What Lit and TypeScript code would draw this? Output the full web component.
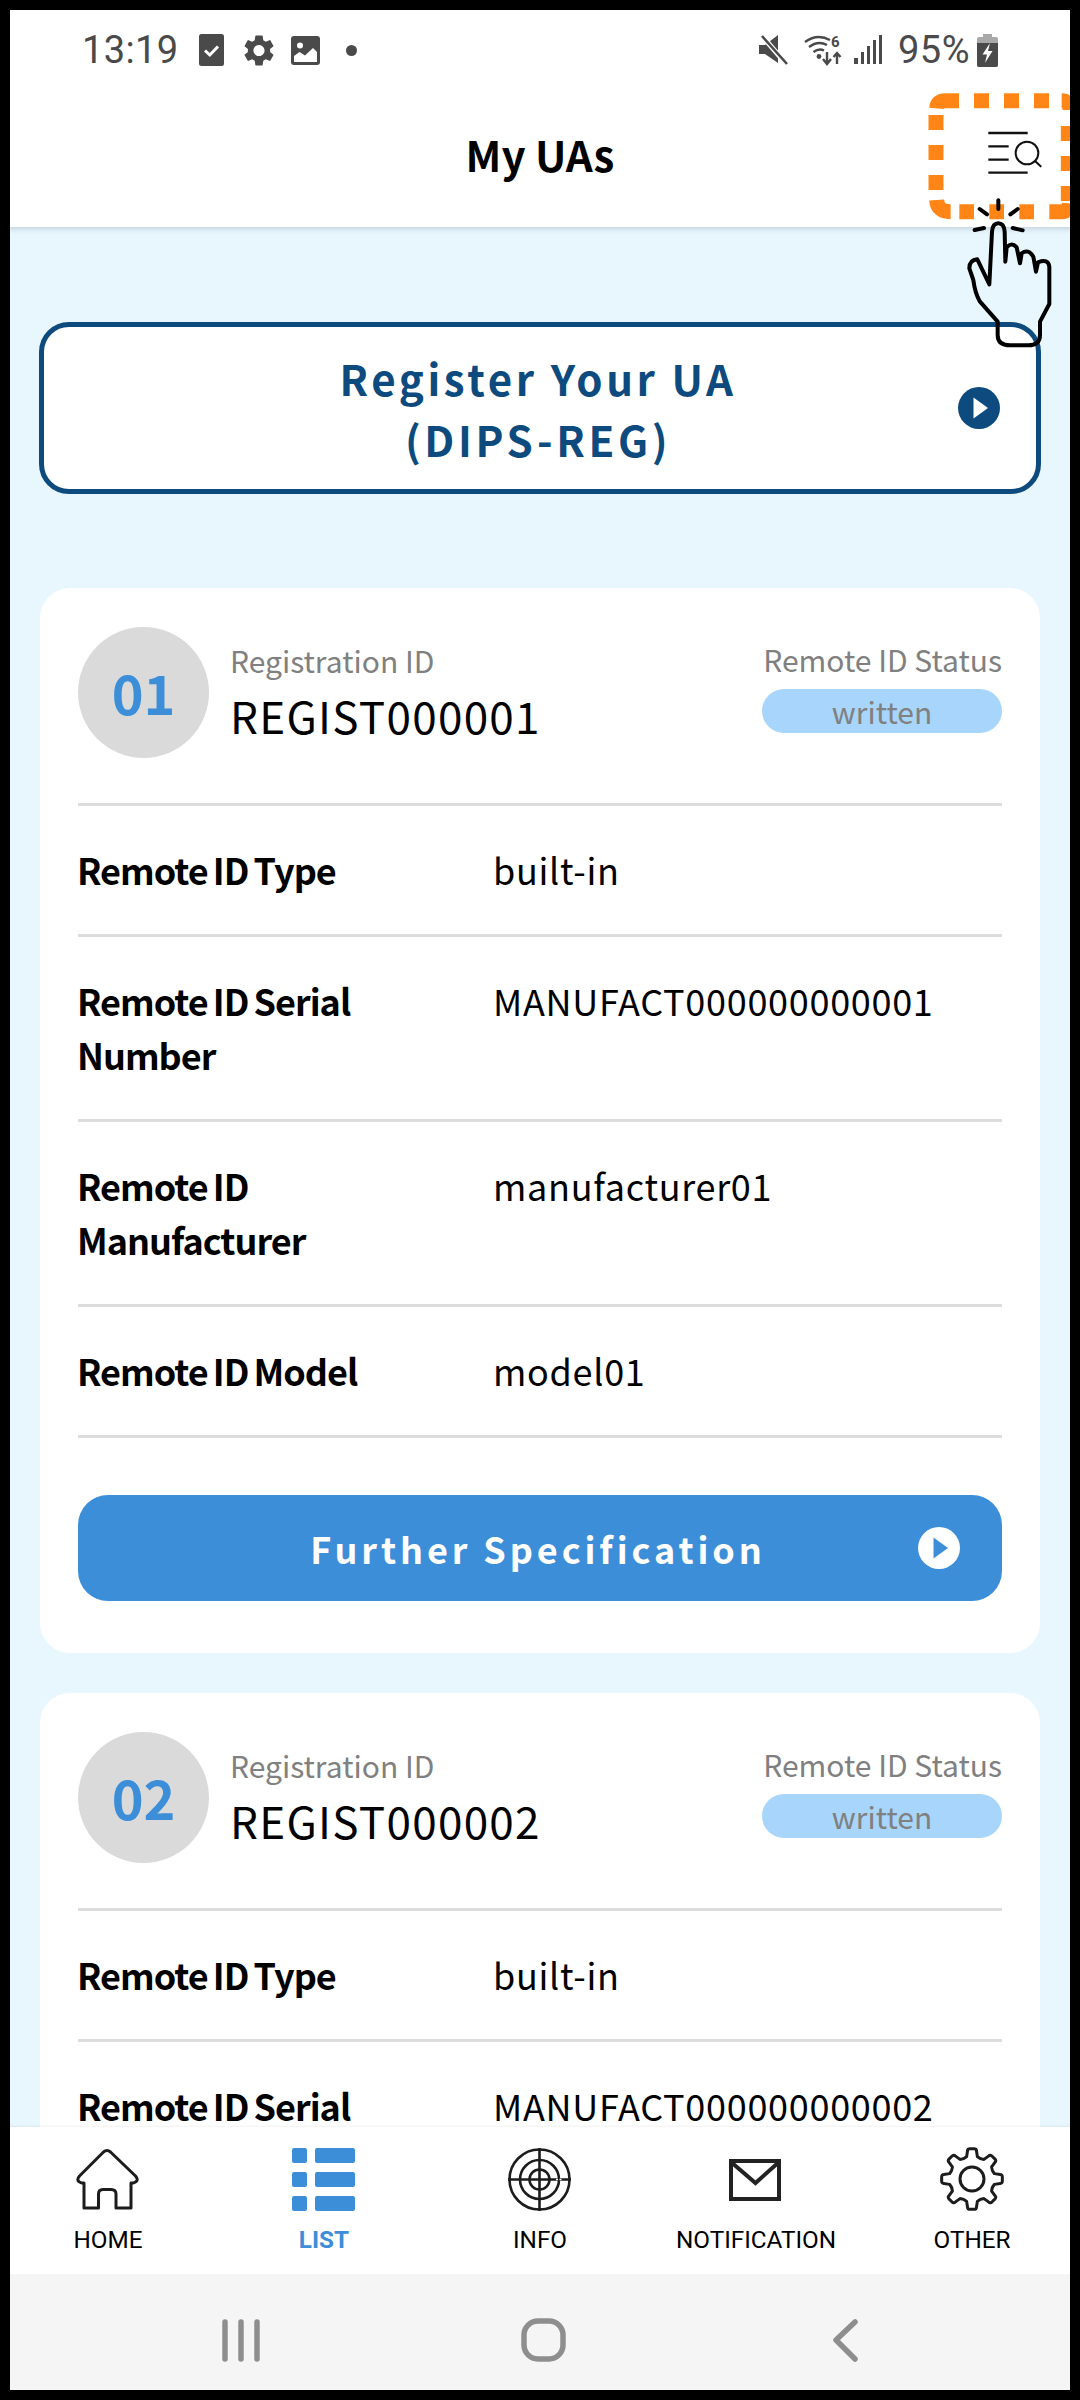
import { LitElement, html, css } from "lit";
import { customElement } from "lit/decorators.js";

const gearPts = (() => {
  const cx = 32, cy = 32, n = 8;
  const d: string[] = [];
  for (let i = 0; i < n; i++) {
    const a = (i * 2 * Math.PI) / n - Math.PI / 2;
    const w = (2 * Math.PI) / n;
    const p = (r: number, t: number) =>
      `${(cx + r * Math.cos(a + t)).toFixed(2)} ${(cy + r * Math.sin(a + t)).toFixed(2)}`;
    d.push(
      `${i === 0 ? "M" : "L"}${p(23, -w * 0.3)}`,
      `L${p(28.6, -w * 0.2)}`,
      `Q${p(30.6, -w * 0.19)} ${p(30.4, -w * 0.08)}`,
      `L${p(30.4, w * 0.08)}`,
      `Q${p(30.6, w * 0.19)} ${p(28.6, w * 0.2)}`,
      `L${p(23, w * 0.3)}`,
      `Q${p(21.4, w * 0.5)} ${p(23, w * 0.7)}`
    );
  }
  return d.join(" ") + "Z";
})();

const MATERIAL_GEAR =
  "M19.14 12.94c.04-.3.06-.61.06-.94 0-.32-.02-.64-.07-.94l2.03-1.58c.18-.14.23-.41.12-.61l-1.92-3.32c-.12-.22-.37-.29-.59-.22l-2.39.96c-.5-.38-1.03-.7-1.62-.94l-.36-2.54c-.04-.24-.24-.41-.48-.41h-3.84c-.24 0-.43.17-.47.41l-.36 2.54c-.59.24-1.13.57-1.62.94l-2.39-.96c-.22-.08-.47 0-.59.22L2.74 8.87c-.12.21-.08.47.12.61l2.03 1.58c-.05.3-.09.63-.09.94s.02.64.07.94l-2.03 1.58c-.18.14-.23.41-.12.61l1.92 3.32c.12.22.37.29.59.22l2.39-.96c.5.38 1.03.7 1.62.94l.36 2.54c.05.24.24.41.48.41h3.84c.24 0 .44-.17.47-.41l.36-2.54c.59-.24 1.13-.56 1.62-.94l2.39.96c.22.08.47 0 .59-.22l1.92-3.32c.12-.22.07-.47-.12-.61l-2.01-1.58zM12 15.6c-1.98 0-3.6-1.62-3.6-3.6s1.62-3.6 3.6-3.6 3.6 1.62 3.6 3.6-1.62 3.6-3.6 3.6z";

const play = (fg: string, bg: string) => html`<svg class="play" viewBox="0 0 42 42">
  <circle cx="21" cy="21" r="21" fill=${bg}></circle>
  <path d="M15.5 10.5 L30 21 L15.5 31.5Z" fill=${fg}></path>
</svg>`;

interface Card {
  num: string;
  id: string;
  serial: string;
  maker: string;
  model: string;
}

const CARDS: Card[] = [
  { num: "01", id: "REGIST000001", serial: "MANUFACT000000000001", maker: "manufacturer01", model: "model01" },
  { num: "02", id: "REGIST000002", serial: "MANUFACT000000000002", maker: "manufacturer02", model: "model02" },
];

@customElement("app-root")
export class AppRoot extends LitElement {
  static styles = css`
    :host {
      display: block;
      position: relative;
      width: 1080px;
      height: 2400px;
      overflow: hidden;
      background: #e8f6fe;
      font-family: "Noto Sans CJK JP", "Noto Sans", sans-serif;
    }
    .screen {
      display: flex;
      flex-direction: column;
      height: 2400px;
    }
    .top {
      background: #fff;
      box-shadow: 0 2px 5px rgba(60, 80, 100, 0.22);
      position: relative;
      z-index: 2;
      flex: none;
    }
    .status {
      height: 100px;
      display: flex;
      align-items: center;
      justify-content: space-between;
      padding: 0 82px;
      color: #4a4a4a;
      font: 400 38px Roboto, sans-serif;
    }
    .status .group {
      display: flex;
      align-items: center;
    }
    .status svg {
      display: block;
      flex: none;
    }
    .time { margin-right: 20px; letter-spacing: 0.4px; }
    .pct { margin: 0 7px 0 16px; letter-spacing: 0.5px; }
    .i-check { margin-right: 20px; }
    .i-gear { margin-right: 17px; }
    .i-image { margin-right: 26px; }
    .i-mute { margin-right: 16px; }
    .i-wifi { margin-right: 10px; }
    .title {
      height: 127px;
      box-sizing: border-box;
      padding-bottom: 20px;
      display: flex;
      align-items: center;
      justify-content: center;
      font-size: 42px;
      font-weight: 700;
      color: #000;
    }
    .content {
      flex: 1;
      min-height: 0;
      overflow: hidden;
      padding: 95px 40px 0;
      display: flex;
      flex-direction: column;
    }
    .register {
      flex: none;
      box-sizing: border-box;
      height: 172px;
      border: 5px solid #0d4a7e;
      border-radius: 30px;
      background: #fff;
      color: #0d4a7e;
      display: flex;
      align-items: center;
      justify-content: center;
      text-align: center;
      font-size: 42px;
      line-height: 61px;
      font-weight: 700;
      letter-spacing: 3.6px;
      position: relative;
      margin: 0 -1px 94px;
      padding-right: 4px;
    }
    .play {
      position: absolute;
      width: 42px;
      height: 42px;
      top: 50%;
      margin-top: -21px;
    }
    .register .play { right: 36px; }
    .more .play { right: 42px; }
    .card {
      flex: none;
      background: #fff;
      border-radius: 30px;
      padding: 39px 38px 52px;
      margin-bottom: 40px;
    }
    .head {
      display: flex;
      align-items: center;
      padding-bottom: 45px;
    }
    .num {
      width: 131px;
      height: 131px;
      box-sizing: border-box;
      padding-bottom: 2px;
      border-radius: 50%;
      background: #dadada;
      color: #3d8ed8;
      font-size: 54px;
      font-weight: 700;
      display: flex;
      align-items: center;
      justify-content: center;
      flex: none;
      margin-right: 21px;
    }
    .ident { flex: 1; }
    .small {
      font-size: 30px;
      line-height: 44px;
      color: #808080;
    }
    .id {
      font-size: 44px;
      line-height: 64px;
      letter-spacing: 1.3px;
      color: #000;
      margin-top: 1px;
      margin-bottom: 1px;
    }
    .state {
      width: 240px;
      flex: none;
      text-align: center;
      align-self: flex-start;
      margin-top: 10px;
    }
    .state .small { text-align: right; white-space: nowrap; }
    .pill {
      background: #a8d5fb;
      border-radius: 22px;
      height: 44px;
      line-height: 44px;
      font-size: 30px;
      color: #808080;
      margin-top: 8px;
    }
    .row {
      border-top: 3px solid #dcdcdc;
      padding: 36px 0 38px;
      display: grid;
      grid-template-columns: 400px 1fr;
      column-gap: 16px;
      font-size: 36px;
      line-height: 54px;
      color: #000;
    }
    .row b {
      font-weight: 700;
      letter-spacing: -1px;
      word-spacing: -2px;
      margin-left: -1px;
    }
    .row span {
      letter-spacing: 0.7px;
      margin-left: -1px;
    }
    .rule {
      border-top: 3px solid #dcdcdc;
    }
    .more {
      margin-top: 57px;
      height: 106px;
      box-sizing: border-box;
      padding-right: 4px;
      border-radius: 30px;
      background: #3d8ed8;
      color: #fff;
      font-size: 36px;
      font-weight: 700;
      letter-spacing: 3.9px;
      display: flex;
      align-items: center;
      justify-content: center;
      position: relative;
    }
    .tabs {
      flex: none;
      position: relative;
      z-index: 2;
      height: 147px;
      background: #fff;
      box-shadow: 0 -1px 2px rgba(0, 0, 0, 0.06);
      display: grid;
      grid-template-columns: repeat(5, 1fr);
    }
    .tab {
      display: flex;
      flex-direction: column;
      align-items: center;
      padding-top: 20px;
      font: 400 24.3px Roboto, sans-serif;
      color: #000;
    }
    .tab svg {
      display: block;
      width: 64px;
      height: 64px;
    }
    .tab span { margin-top: 15px; line-height: 28px; }
    .tab.on { color: #3d8ed8; font-weight: 700; }
    .nav {
      flex: none;
      height: 126px;
      background: #f5f5f5;
      position: relative;
      z-index: 2;
    }
    .nav svg { display: block; width: 1080px; height: 126px; }
    .overlay {
      position: absolute;
      left: 0;
      top: 0;
      width: 1080px;
      height: 360px;
      z-index: 3;
      pointer-events: none;
    }
    .frame {
      position: absolute;
      inset: 0;
      border: 10px solid #000;
      z-index: 4;
      pointer-events: none;
    }
  `;

  private cardTpl(c: Card) {
    return html`<section class="card">
      <div class="head">
        <div class="num">${c.num}</div>
        <div class="ident">
          <div class="small">Registration ID</div>
          <div class="id">${c.id}</div>
        </div>
        <div class="state">
          <div class="small">Remote ID Status</div>
          <div class="pill">written</div>
        </div>
      </div>
      <div class="row"><b>Remote ID Type</b><span>built-in</span></div>
      <div class="row"><b>Remote ID Serial Number</b><span>${c.serial}</span></div>
      <div class="row"><b>Remote ID Manufacturer</b><span>${c.maker}</span></div>
      <div class="row"><b>Remote ID Model</b><span>${c.model}</span></div>
      <div class="rule"></div>
      <div class="more">Further Specification${play("#3d8ed8", "#fff")}</div>
    </section>`;
  }

  render() {
    const c = "#4a4a4a";
    return html`<div class="screen">
        <div class="top">
          <div class="status">
            <div class="group">
              <span class="time">13:19</span>
              <svg class="i-check" width="25" height="32" viewBox="0 0 25 32">
                <rect width="25" height="32" rx="2.5" fill=${c}></rect>
                <path d="M6 16.500 L10.800 21 L19 12.500" fill="none" stroke="#fff" stroke-width="3"></path>
              </svg>
              <svg class="i-gear" width="30" height="31" viewBox="2.5 2 19 20"><path d=${MATERIAL_GEAR} fill=${c}></path></svg>
              <svg class="i-image" width="29" height="29" viewBox="0 0 29 29">
                <rect width="29" height="29" rx="3" fill=${c}></rect>
                <circle cx="9" cy="9.500" r="3" fill="#fff"></circle>
                <path d="M3 26 V20 L8.500 16 L14 19.500 L22 12 L26 16 V26Z" fill="#fff"></path>
              </svg>
              <svg width="11" height="11" viewBox="0 0 11 11"><circle cx="5.500" cy="5.500" r="5.500" fill=${c}></circle></svg>
            </div>
            <div class="group">
              <svg class="i-mute" width="29" height="30" viewBox="0 0 29 30">
                <path d="M0 10 H6 L19 0 V28 L6 19 H0Z" fill=${c}></path>
                <path d="M4 2 L28 30" stroke="#fff" stroke-width="5"></path>
                <path d="M3 1 L28 29" stroke=${c} stroke-width="2.600"></path>
              </svg>
              <svg class="i-wifi" width="40" height="32" viewBox="0 0 40 32">
                <g fill="none" stroke=${c} stroke-width="2.400">
                  <path d="M1 8 Q13 -1 26 6"></path>
                  <path d="M5 13 Q14 6 23 11"></path>
                  <path d="M9.500 18 Q15 14 20 16.500"></path>
                  <path d="M23 18 V29 M19 25 L23 30 L27 25"></path>
                  <path d="M33 30 V20 M29.500 23 L33 19 L36.500 23"></path>
                </g>
                <circle cx="15" cy="22.500" r="2.400" fill=${c}></circle>
                <text x="27" y="12.500" font-family="Roboto" font-weight="700" font-size="15" fill=${c}>6</text>
              </svg>
              <svg width="28" height="30" viewBox="0 0 28 30">
                <g fill=${c}>
                  <rect x="0" y="23" width="4" height="6"></rect>
                  <rect x="7" y="17" width="3" height="12"></rect>
                  <rect x="13" y="11" width="3" height="18"></rect>
                  <rect x="19" y="5" width="3" height="24"></rect>
                  <rect x="25" y="0" width="3" height="29"></rect>
                </g>
              </svg>
              <span class="pct">95%</span>
              <svg width="21" height="33" viewBox="0 0 21 33">
                <path d="M6 0 H15 V3 H19 Q21 3 21 5 V31 Q21 33 19 33 H2 Q0 33 0 31 V5 Q0 3 2 3 H6Z" fill="#a8a8a8"></path>
                <path d="M0 9 H21 V31 Q21 33 19 33 H2 Q0 33 0 31Z" fill=${c}></path>
                <path d="M13 9 L5.500 20.500 H10 L8 29 L15.500 17 H11Z" fill="#fff"></path>
              </svg>
            </div>
          </div>
          <div class="title">My UAs</div>
        </div>

        <div class="content">
          <div class="register">
            <div>Register Your UA<br />(DIPS-REG)</div>
            ${play("#fff", "#0d4a7e")}
          </div>
          ${CARDS.map((x) => this.cardTpl(x))}
        </div>

        <nav class="tabs">
          <div class="tab">
            <svg viewBox="0 0 64 64">
              <path d="M27.500 5 Q31 2 34.500 5 L59.500 29 Q63 33 59.500 35 Q57 36.500 55 36 V61 H40 V47 Q40 42.500 35 42.500 H27 Q22.500 42.500 22.500 47 V61 H8 V36 Q6 36.500 3.500 35 Q0 33 3.500 29Z"
                fill="none" stroke="#1c1c1c" stroke-width="3" stroke-linejoin="round"></path>
            </svg>
            <span>HOME</span>
          </div>
          <div class="tab on">
            <svg viewBox="0 0 64 64">
              <g fill="#3d8ed8">
                <rect x="0" y="1" width="15" height="15" rx="2"></rect>
                <rect x="23" y="1" width="40" height="15" rx="2"></rect>
                <rect x="0" y="25" width="15" height="15" rx="2"></rect>
                <rect x="23" y="25" width="40" height="15" rx="2"></rect>
                <rect x="0" y="49" width="15" height="15" rx="2"></rect>
                <rect x="23" y="49" width="40" height="15" rx="2"></rect>
              </g>
            </svg>
            <span>LIST</span>
          </div>
          <div class="tab">
            <svg viewBox="0 0 64 64">
              <g fill="none" stroke="#1c1c1c" stroke-width="2.600">
                <circle cx="31.500" cy="32.500" r="30"></circle>
                <circle cx="31.500" cy="32.500" r="19.500"></circle>
                <circle cx="31.500" cy="32.500" r="10"></circle>
                <path d="M31.500 1 V64 M0 32.500 H63"></path>
              </g>
              <path d="M48 32.500 H54" stroke="#fff" stroke-width="1.500" stroke-dasharray="2 1.500"></path>
            </svg>
            <span>INFO</span>
          </div>
          <div class="tab">
            <svg viewBox="0 0 64 64">
              <g fill="none" stroke="#222" stroke-width="4">
                <rect x="7" y="14" width="48" height="38"></rect>
                <path d="M7 15 L31.500 36 L55 15"></path>
              </g>
            </svg>
            <span>NOTIFICATION</span>
          </div>
          <div class="tab">
            <svg viewBox="0 0 64 64">
              <path d=${gearPts} fill="none" stroke="#1c1c1c" stroke-width="3" stroke-linejoin="round"></path>
              <circle cx="32" cy="32" r="12" fill="none" stroke="#1c1c1c" stroke-width="3"></circle>
            </svg>
            <span>OTHER</span>
          </div>
        </nav>

        <div class="nav">
          <svg viewBox="0 0 1080 126">
            <g fill="none" stroke="#8e8e8e" stroke-width="5.500" stroke-linecap="round" stroke-linejoin="round">
              <path d="M225 48 V85 M241 48 V85 M257 48 V85"></path>
              <rect x="524" y="47" width="39" height="38" rx="14"></rect>
              <path d="M855 48 L836 66 L855 85"></path>
            </g>
          </svg>
        </div>
      </div>

      <svg class="overlay" viewBox="0 0 1080 360">
        <g transform="translate(700 0) scale(0.33333)">
          <g fill="none" stroke="#ff8616" stroke-width="45">
            <path d="M710 325 Q712 302 735 302 H777"></path>
            <path d="M822 302 H867 M912 302 H957 M1002 302 H1047"></path>
            <path d="M1085 302 Q1110 302 1110 330"></path>
            <path d="M708 345 V390 M708 435 V480 M708 525 V570"></path>
            <path d="M1105 378 V423 M1105 468 V513 M1105 558 V603"></path>
            <path d="M710 600 Q712 635 752 635"></path>
            <path d="M778 635 H822 M868 635 H912 M958 635 H1002"></path>
            <path d="M1048 635 H1085 Q1106 635 1108 610"></path>
          </g>
          <g fill="none" stroke="#111" stroke-width="6">
            <path d="M865 399 H983 M865 439 H926 M865 479 H926 M865 518 H983" stroke-width="7"></path>
            <circle cx="981" cy="459" r="34"></circle>
            <path d="M1005 483 L1022 499" stroke-linecap="round"></path>
          </g>
          <g fill="none" stroke="#000" stroke-width="12" stroke-linecap="round" stroke-linejoin="round">
            <path d="M895 601 V627 M839 627 L861 643 M953 627 L931 643 M824 690 L852 684 M938 684 L968 691"></path>
            <path d="M868 853 L876 695 Q878 670 895 670 Q912 670 914 695 L916 785 L920 742 Q935 725 950 742 L960 790 L965 760 Q985 745 1000 770 L1008 815 L1014 787 Q1045 775 1048 800 V912 L1020 965 V1005 Q1020 1036 985 1036 H930 Q893 1036 893 1005 V965 L840 905 Q825 880 820 840 L808 805 Q808 780 832 778 Z"></path>
          </g>
        </g>
      </svg>

      <div class="frame"></div>`;
  }
}
